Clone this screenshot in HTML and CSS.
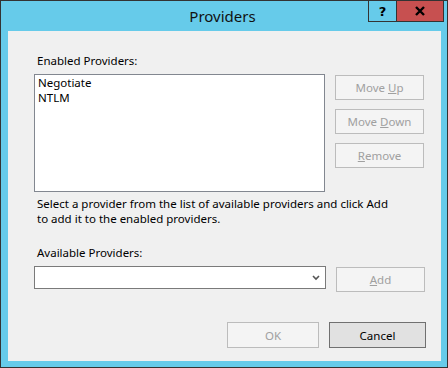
FILE: index.html
```html
<!DOCTYPE html>
<html lang="en">
<head>
    <meta charset="UTF-8">
    <title>Providers</title>
    <link rel="stylesheet" href="styles.css">
</head>
<body>
    <div class="window">
        <div class="titlebar">
            <span class="spacer"></span>
            <span class="title">Providers</span>
            <div class="caption-btns">
                <span class="cap-btn help">?</span>
                <span class="cap-btn close">
                    <svg width="12" height="10" viewBox="0 0 12 10">
                        <path d="M2 1 L10 9 M10 1 L2 9" stroke="#000" stroke-width="2.4" fill="none"/>
                    </svg>
                </span>
            </div>
        </div>

        <div class="client">
            <div class="label">Enabled Providers:</div>
            <div class="row list-row">
                <div class="listbox">
                    <div class="item">Negotiate</div>
                    <div class="item">NTLM</div>
                </div>
                <div class="side-btns">
                    <button class="btn" disabled>Move <u>U</u>p</button>
                    <button class="btn" disabled>Move <u>D</u>own</button>
                    <button class="btn" disabled><u>R</u>emove</button>
                </div>
            </div>

            <p class="hint">Select a provider from the list of available providers and click Add<br>to add it to the enabled providers.</p>

            <div class="label label-available">Available Providers:</div>
            <div class="row combo-row">
                <div class="combo">
                    <svg class="arrow" width="8" height="6" viewBox="0 0 8 6">
                        <path d="M1 1 L4 4 L7 1" stroke="#555" stroke-width="1.6" fill="none"/>
                    </svg>
                </div>
                <button class="btn" disabled><u>A</u>dd</button>
            </div>

            <div class="footer">
                <button class="btn ok" disabled>OK</button>
                <button class="btn cancel">Cancel</button>
            </div>
        </div>
    </div>
</body>
</html>
```

FILE: styles.css
```css
body {
    margin: 0;
    font-family: "Noto Sans", "Open Sans", sans-serif;
    font-size: 11.5px;
    color: #000;
}

.window {
    width: 448px;
    height: 368px;
    box-sizing: border-box;
    border: 1px solid #333;
    background: #66cbea;
    display: flex;
    flex-direction: column;
}

.titlebar {
    height: 30px;
    display: grid;
    grid-template-columns: 76px 1fr 76px;
    align-items: start;
    padding-right: 3px;
}

.title {
    text-align: center;
    font-size: 15px;
    line-height: 20px;
    padding-top: 5px;
    color: #111;
}

.caption-btns {
    display: flex;
    height: 20px;
}

.cap-btn {
    display: flex;
    align-items: center;
    justify-content: center;
    border: 1px solid #333;
    border-top: none;
    box-sizing: border-box;
    height: 21px;
}

.help {
    width: 29px;
    font-weight: bold;
    font-size: 13px;
    font-family: "DejaVu Sans", sans-serif;
}

.close {
    width: 48px;
    margin-left: -1px;
    background: #c75050;
}

.client {
    flex: 1;
    margin: 0 6px 6px 7px;
    background: #f0f0f0;
    padding: 22px 0 0 26px;
}

.label {
    line-height: 15px;
    margin-left: 3px;
}

.row {
    display: flex;
    align-items: flex-start;
    gap: 10px;
}

.list-row {
    margin-top: 6px;
}

.listbox {
    width: 291px;
    height: 118px;
    box-sizing: border-box;
    border: 1px solid #828790;
    background: #fff;
    padding: 0 3px;
}

.item {
    line-height: 15px;
}

.side-btns {
    display: flex;
    flex-direction: column;
    gap: 9px;
    margin-top: 1px;
}

.btn {
    width: 89px;
    height: 25px;
    box-sizing: border-box;
    border: 1px solid #bcbcbc;
    background: #f4f4f4;
    color: #a0a0a0;
    font-family: inherit;
    font-size: 11.5px;
    padding: 0;
}

.hint {
    margin: 4px 0 0 3px;
    line-height: 15px;
}

.label-available {
    margin-top: 19px;
}

.combo-row {
    margin-top: 6px;
}

.combo {
    width: 292px;
    height: 23px;
    box-sizing: border-box;
    border: 1px solid #7a7a7a;
    background: #fff;
    display: flex;
    align-items: center;
    justify-content: flex-end;
    padding-right: 5px;
}

.combo-row .btn {
    margin-top: 1px;
}

.footer {
    display: flex;
    justify-content: flex-end;
    gap: 10px;
    margin-top: 30px;
    padding-right: 15px;
}

.ok {
    width: 92px;
    height: 26px;
}

.cancel {
    width: 97px;
    height: 26px;
    background: #e1e1e1;
    border-color: #707070;
    color: #000;
}
```
